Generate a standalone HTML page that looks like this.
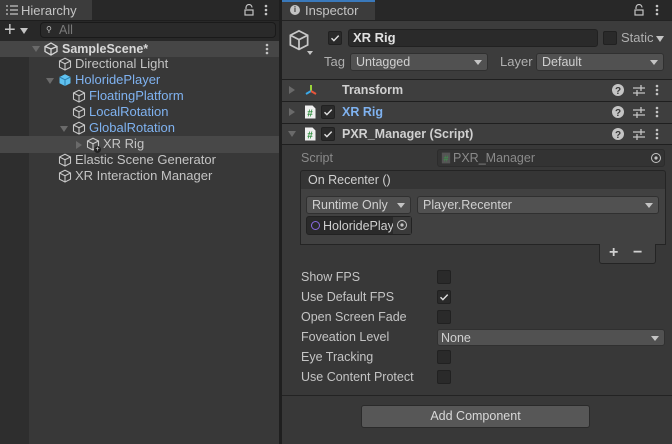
<!DOCTYPE html>
<html><head><style>
*{margin:0;padding:0;box-sizing:border-box}
body{width:672px;height:444px;background:#383838;font-family:"Liberation Sans",sans-serif;font-size:12.5px;color:#c4c4c4;position:relative;overflow:hidden}
.a{position:absolute}
.t{position:absolute;white-space:nowrap;line-height:16px}
.h{font-size:13px}
.blue{color:#7fb2f0}
.cb{position:absolute;width:14px;height:14px;background:#2a2a2a;border:1px solid #212121;border-radius:2px}
.dd{position:absolute;background:#515151;border:1px solid #303030;border-radius:3px;color:#d0d0d0;line-height:16px;padding-left:5px}
.arr{position:absolute;right:5px;top:6px;width:0;height:0;border-left:4px solid transparent;border-right:4px solid transparent;border-top:5px solid #c4c4c4}
.hl{position:absolute;height:1px;background:#1f1f1f;left:282px;right:0}
.tri{position:absolute;width:0;height:0;border-left:4px solid transparent;border-right:4px solid transparent;border-top:6px solid #6a6a6a}
.trr{position:absolute;width:0;height:0;border-top:4px solid transparent;border-bottom:4px solid transparent;border-left:6px solid #6a6a6a}
</style></head><body>
<svg width="0" height="0" style="position:absolute"><defs>
<symbol id="cube" viewBox="0 0 14 14"><path d="M7 1.2L12.5 4v6.2L7 13 1.5 10.2V4z M1.5 4L7 6.8 12.5 4 M7 6.8V13" fill="none" stroke="#c8c8c8" stroke-width="1.1"/></symbol>
<symbol id="bcube" viewBox="0 0 14 14"><path d="M7 1.2L12.5 4v6.2L7 13 1.5 10.2V4z" fill="#5fc1ef"/><path d="M1.5 4L7 6.8 12.5 4 M7 6.8V13" fill="none" stroke="#2a7fb0" stroke-width="1"/></symbol>
<symbol id="dots" viewBox="0 0 4 14"><circle cx="2" cy="3" r="1.3" fill="#c4c4c4"/><circle cx="2" cy="7" r="1.3" fill="#c4c4c4"/><circle cx="2" cy="11" r="1.3" fill="#c4c4c4"/></symbol>
<symbol id="help" viewBox="0 0 14 14"><circle cx="7" cy="7" r="6" fill="#c4c4c4"/><text x="7" y="11" font-size="10" font-weight="bold" text-anchor="middle" fill="#383838" font-family="Liberation Sans">?</text></symbol>
<symbol id="sl" viewBox="0 0 14 14"><path d="M1 5h12M1 10h12M9 2v6M5 7v6" stroke="#c4c4c4" stroke-width="1.3" fill="none"/></symbol>
<symbol id="scr" viewBox="0 0 12 14"><path d="M1 0.5h7.5l3 3V13.5H1z" fill="#f0f0f0"/><text x="6" y="11.5" font-size="10" font-weight="bold" text-anchor="middle" fill="#2a8a3a" font-family="Liberation Sans">#</text></symbol>
<symbol id="chk" viewBox="0 0 14 14"><path d="M3.5 7.2l2.4 2.4 4.8-5" stroke="#e0e0e0" stroke-width="1.4" fill="none"/></symbol>
<symbol id="lock" viewBox="0 0 10 12"><path d="M2 5V3.5a3 3 0 0 1 6 0" stroke="#c4c4c4" stroke-width="1.2" fill="none"/><rect x="1" y="6" width="8" height="5" fill="none" stroke="#c4c4c4" stroke-width="1.2"/></symbol>
<symbol id="tgt" viewBox="0 0 12 12"><circle cx="6" cy="6" r="4.5" stroke="#c4c4c4" fill="none"/><circle cx="6" cy="6" r="1.6" fill="#c4c4c4"/></symbol>
</defs></svg>

<div class="a" style="left:0;top:0;width:672px;height:20px;background:#282828"></div>
<div class="a" style="left:0;top:0;width:92px;height:21px;background:#3c3c3c"></div>
<svg class="a" style="left:6px;top:5px" width="12" height="10"><path d="M0 1h2M4 1h8M0 5h2M4 5h8M0 9h2M4 9h8" stroke="#c4c4c4" stroke-width="1.2"/></svg>
<div class="t" style="left:21px;top:3px;font-size:13px">Hierarchy</div>
<svg class="a" style="left:244px;top:4px" width="10" height="12"><use href="#lock"/></svg>
<svg class="a" style="left:264px;top:3px" width="4" height="14"><use href="#dots"/></svg>
<div class="a" style="left:0;top:20px;width:280px;height:21px;background:#282828;border-top:1px solid #1e1e1e"></div>
<div class="t" style="left:4px;top:20px;font-size:20px;line-height:20px;color:#c8c8c8">+</div>
<div class="tri" style="left:20px;top:28px;border-top-color:#c4c4c4"></div>
<div class="a" style="left:40px;top:22px;width:236px;height:16px;background:#2a2a2a;border:1px solid #1a1a1a;border-radius:4px"></div>
<div class="t" style="left:46px;top:23px;font-size:8px;line-height:14px">⚲</div>
<div class="t" style="left:59px;top:22px;color:#7a7a7a">All</div>
<div class="a" style="left:0;top:41px;width:29px;height:403px;background:#2e2e2e"></div>
<div class="a" style="left:0;top:41px;width:280px;height:16px;background:#464646"></div>
<div class="a" style="left:0;top:136px;width:280px;height:17px;background:#484848"></div>
<div class="a" style="left:279px;top:0;width:3px;height:444px;background:#1f1f1f"></div>
<div class="tri" style="left:32px;top:46px"></div>
<svg class="a" style="left:44px;top:42px" width="14" height="14" viewBox="0 0 14 14"><path d="M7 1l6 3.5v5L7 13 1 9.5v-5z M7 7L1 4.5 M7 7l6-2.5 M7 7v6" stroke="#d8d8d8" stroke-width="1.3" fill="none"/></svg>
<div class="t" style="left:62px;top:41px;font-weight:bold;color:#d8d8d8">SampleScene*</div>
<svg class="a" style="left:265px;top:42px" width="4" height="14"><use href="#dots"/></svg>
<svg class="a" style="left:58px;top:57px" width="14" height="14"><use href="#cube"/></svg><div class="t h" style="left:75px;top:56px">Directional Light</div>
<div class="tri" style="left:46px;top:78px"></div>
<svg class="a" style="left:58px;top:73px" width="14" height="14"><use href="#bcube"/></svg><div class="t h blue" style="left:75px;top:72px">HoloridePlayer</div>
<svg class="a" style="left:72px;top:89px" width="14" height="14"><use href="#cube"/></svg><div class="t h blue" style="left:89px;top:88px">FloatingPlatform</div>
<svg class="a" style="left:72px;top:105px" width="14" height="14"><use href="#cube"/></svg><div class="t h blue" style="left:89px;top:104px">LocalRotation</div>
<div class="tri" style="left:60px;top:126px"></div>
<svg class="a" style="left:72px;top:121px" width="14" height="14"><use href="#cube"/></svg><div class="t h blue" style="left:89px;top:120px">GlobalRotation</div>
<div class="trr" style="left:76px;top:141px"></div>
<svg class="a" style="left:86px;top:137px" width="14" height="14"><use href="#cube"/></svg>
<div class="a" style="left:94px;top:146px;width:7px;height:7px;border-radius:50%;background:#222;color:#eee;font-size:7px;line-height:7px;text-align:center">+</div>
<div class="t h" style="left:103px;top:136px">XR Rig</div>
<svg class="a" style="left:58px;top:153px" width="14" height="14"><use href="#cube"/></svg><div class="t h" style="left:75px;top:152px">Elastic Scene Generator</div>
<svg class="a" style="left:58px;top:169px" width="14" height="14"><use href="#cube"/></svg><div class="t h" style="left:75px;top:168px">XR Interaction Manager</div>

<div class="a" style="left:282px;top:0;width:93px;height:21px;background:#3c3c3c;border-top:2px solid #3a79bb"></div>
<div class="a" style="left:290px;top:5px;width:10px;height:10px;border-radius:50%;background:#c4c4c4;color:#3c3c3c;font-size:8px;font-weight:bold;text-align:center;line-height:10px">i</div>
<div class="t" style="left:305px;top:3px;font-size:13px">Inspector</div>
<svg class="a" style="left:634px;top:4px" width="10" height="12"><use href="#lock"/></svg>
<svg class="a" style="left:655px;top:3px" width="4" height="14"><use href="#dots"/></svg>
<div class="a" style="left:282px;top:20px;width:390px;height:1px;background:#232323"></div>
<div class="a" style="left:282px;top:21px;width:390px;height:59px;background:#3c3c3c"></div>
<svg class="a" style="left:288px;top:28px" width="22" height="24"><use href="#cube"/></svg>
<div class="tri" style="left:307px;top:51px;border-top-color:#c4c4c4;border-width:4px 3px 0 3px"></div>
<div class="cb" style="left:328px;top:31px"></div><svg class="a" style="left:328px;top:31px" width="14" height="14"><use href="#chk"/></svg>
<div class="a" style="left:348px;top:29px;width:250px;height:18px;background:#2a2a2a;border:1px solid #212121;border-radius:3px"></div>
<div class="t" style="left:353px;top:30px;font-weight:bold;color:#e0e0e0;font-size:13px">XR Rig</div>
<div class="cb" style="left:603px;top:31px"></div>
<div class="t" style="left:621px;top:30px;color:#b0b0b0;font-size:13px">Static</div>
<div class="tri" style="left:656px;top:36px;border-top-color:#c4c4c4"></div>
<div class="t" style="left:324px;top:54px;color:#b0b0b0;font-size:13px">Tag</div>
<div class="dd" style="left:350px;top:53px;width:138px;height:18px">Untagged<div class="arr"></div></div>
<div class="t" style="left:500px;top:54px;color:#b0b0b0;font-size:13px">Layer</div>
<div class="dd" style="left:536px;top:53px;width:128px;height:18px">Default<div class="arr"></div></div>
<div class="hl" style="top:79px"></div>
<div class="a" style="left:282px;top:80px;width:390px;height:65px;background:#3e3e3e"></div>
<div class="hl" style="top:101px"></div><div class="hl" style="top:123px"></div><div class="hl" style="top:144px"></div>
<div class="trr" style="left:289px;top:86px"></div>
<svg class="a" style="left:304px;top:83px" width="14" height="14" viewBox="0 0 14 14"><path d="M7 2v6" stroke="#9ad43a" stroke-width="2"/><path d="M7 8L2 11" stroke="#3aa8e8" stroke-width="2"/><path d="M7 8l5 3" stroke="#e8553a" stroke-width="2"/></svg>
<div class="t" style="left:342px;top:82px;font-weight:bold;color:#d0d0d0">Transform</div>
<div class="trr" style="left:289px;top:108px"></div>
<svg class="a" style="left:304px;top:105px" width="12" height="14"><use href="#scr"/></svg>
<div class="cb" style="left:321px;top:105px"></div><svg class="a" style="left:321px;top:105px" width="14" height="14"><use href="#chk"/></svg>
<div class="t blue" style="left:342px;top:104px;font-weight:bold">XR Rig</div>
<div class="tri" style="left:288px;top:131px"></div>
<svg class="a" style="left:304px;top:127px" width="12" height="14"><use href="#scr"/></svg>
<div class="cb" style="left:321px;top:127px"></div><svg class="a" style="left:321px;top:127px" width="14" height="14"><use href="#chk"/></svg>
<div class="t" style="left:342px;top:126px;font-weight:bold;color:#d0d0d0">PXR_Manager (Script)</div>
<svg class="a" style="left:611px;top:83px" width="14" height="14"><use href="#help"/></svg><svg class="a" style="left:632px;top:83px" width="14" height="14"><use href="#sl"/></svg><svg class="a" style="left:655px;top:83px" width="4" height="14"><use href="#dots"/></svg>
<svg class="a" style="left:611px;top:105px" width="14" height="14"><use href="#help"/></svg><svg class="a" style="left:632px;top:105px" width="14" height="14"><use href="#sl"/></svg><svg class="a" style="left:655px;top:105px" width="4" height="14"><use href="#dots"/></svg>
<svg class="a" style="left:611px;top:127px" width="14" height="14"><use href="#help"/></svg><svg class="a" style="left:632px;top:127px" width="14" height="14"><use href="#sl"/></svg><svg class="a" style="left:655px;top:127px" width="4" height="14"><use href="#dots"/></svg>
<div class="t" style="left:301px;top:150px;color:#8a8a8a">Script</div>
<div class="a" style="left:437px;top:149px;width:228px;height:18px;background:#333;border:1px solid #2c2c2c;border-radius:3px"></div>
<svg class="a" style="left:441px;top:152px" width="10" height="12" viewBox="0 0 12 14"><path d="M1 0.5h10v13H1z" fill="#555"/><text x="6" y="11" font-size="10" text-anchor="middle" fill="#3a9a4a" font-family="Liberation Sans">#</text></svg>
<div class="t" style="left:453px;top:150px;color:#8a8a8a">PXR_Manager</div>
<svg class="a" style="left:650px;top:152px" width="12" height="12"><use href="#tgt"/></svg>
<div class="a" style="left:300px;top:170px;width:366px;height:20px;background:#353535;border:1px solid #242424;border-radius:3px 3px 0 0"></div>
<div class="t" style="left:308px;top:172px;color:#d0d0d0">On Recenter ()</div>
<div class="a" style="left:300px;top:189px;width:366px;height:56px;background:#414141;border:1px solid #242424;border-top:none"></div>
<div class="dd" style="left:306px;top:196px;width:105px;height:18px">Runtime Only<div class="arr"></div></div>
<div class="dd" style="left:417px;top:196px;width:242px;height:18px">Player.Recenter<div class="arr"></div></div>
<div class="a" style="left:306px;top:216px;width:106px;height:19px;background:#2a2a2a;border:1px solid #222;border-radius:3px;overflow:hidden"></div>
<div class="a" style="left:311px;top:221px;width:9px;height:9px;border-radius:50%;border:1px solid #8a6ae0"></div>
<div class="t" style="left:323px;top:218px;color:#d0d0d0;width:70px;overflow:hidden">HoloridePlay</div>
<div class="a" style="left:393px;top:217px;width:18px;height:17px;background:#3a3a3a"></div>
<svg class="a" style="left:396px;top:219px" width="12" height="12"><use href="#tgt"/></svg>
<div class="a" style="left:599px;top:244px;width:57px;height:20px;background:#414141;border:1px solid #242424;border-top:none;border-radius:0 0 3px 3px"></div>
<div class="t" style="left:609px;top:245px;font-size:16px;font-weight:bold;color:#d0d0d0">+</div>
<div class="t" style="left:633px;top:245px;font-size:16px;font-weight:bold;color:#d0d0d0">−</div>
<div class="t" style="left:301px;top:269px">Show FPS</div><div class="cb" style="left:437px;top:270px"></div>
<div class="t" style="left:301px;top:289px">Use Default FPS</div><div class="cb" style="left:437px;top:290px"></div><svg class="a" style="left:437px;top:290px" width="14" height="14"><use href="#chk"/></svg>
<div class="t" style="left:301px;top:309px">Open Screen Fade</div><div class="cb" style="left:437px;top:310px"></div>
<div class="t" style="left:301px;top:329px">Foveation Level</div>
<div class="dd" style="left:437px;top:329px;width:228px;height:17px;padding-left:3px">None<div class="arr"></div></div>
<div class="t" style="left:301px;top:349px">Eye Tracking</div><div class="cb" style="left:437px;top:350px"></div>
<div class="t" style="left:301px;top:369px">Use Content Protect</div><div class="cb" style="left:437px;top:370px"></div>
<div class="hl" style="top:395px;background:#232323"></div>
<div class="a" style="left:361px;top:405px;width:229px;height:23px;background:#575757;border:1px solid #2a2a2a;border-radius:3px;text-align:center;line-height:20px;color:#d8d8d8">Add Component</div>
</body></html>
